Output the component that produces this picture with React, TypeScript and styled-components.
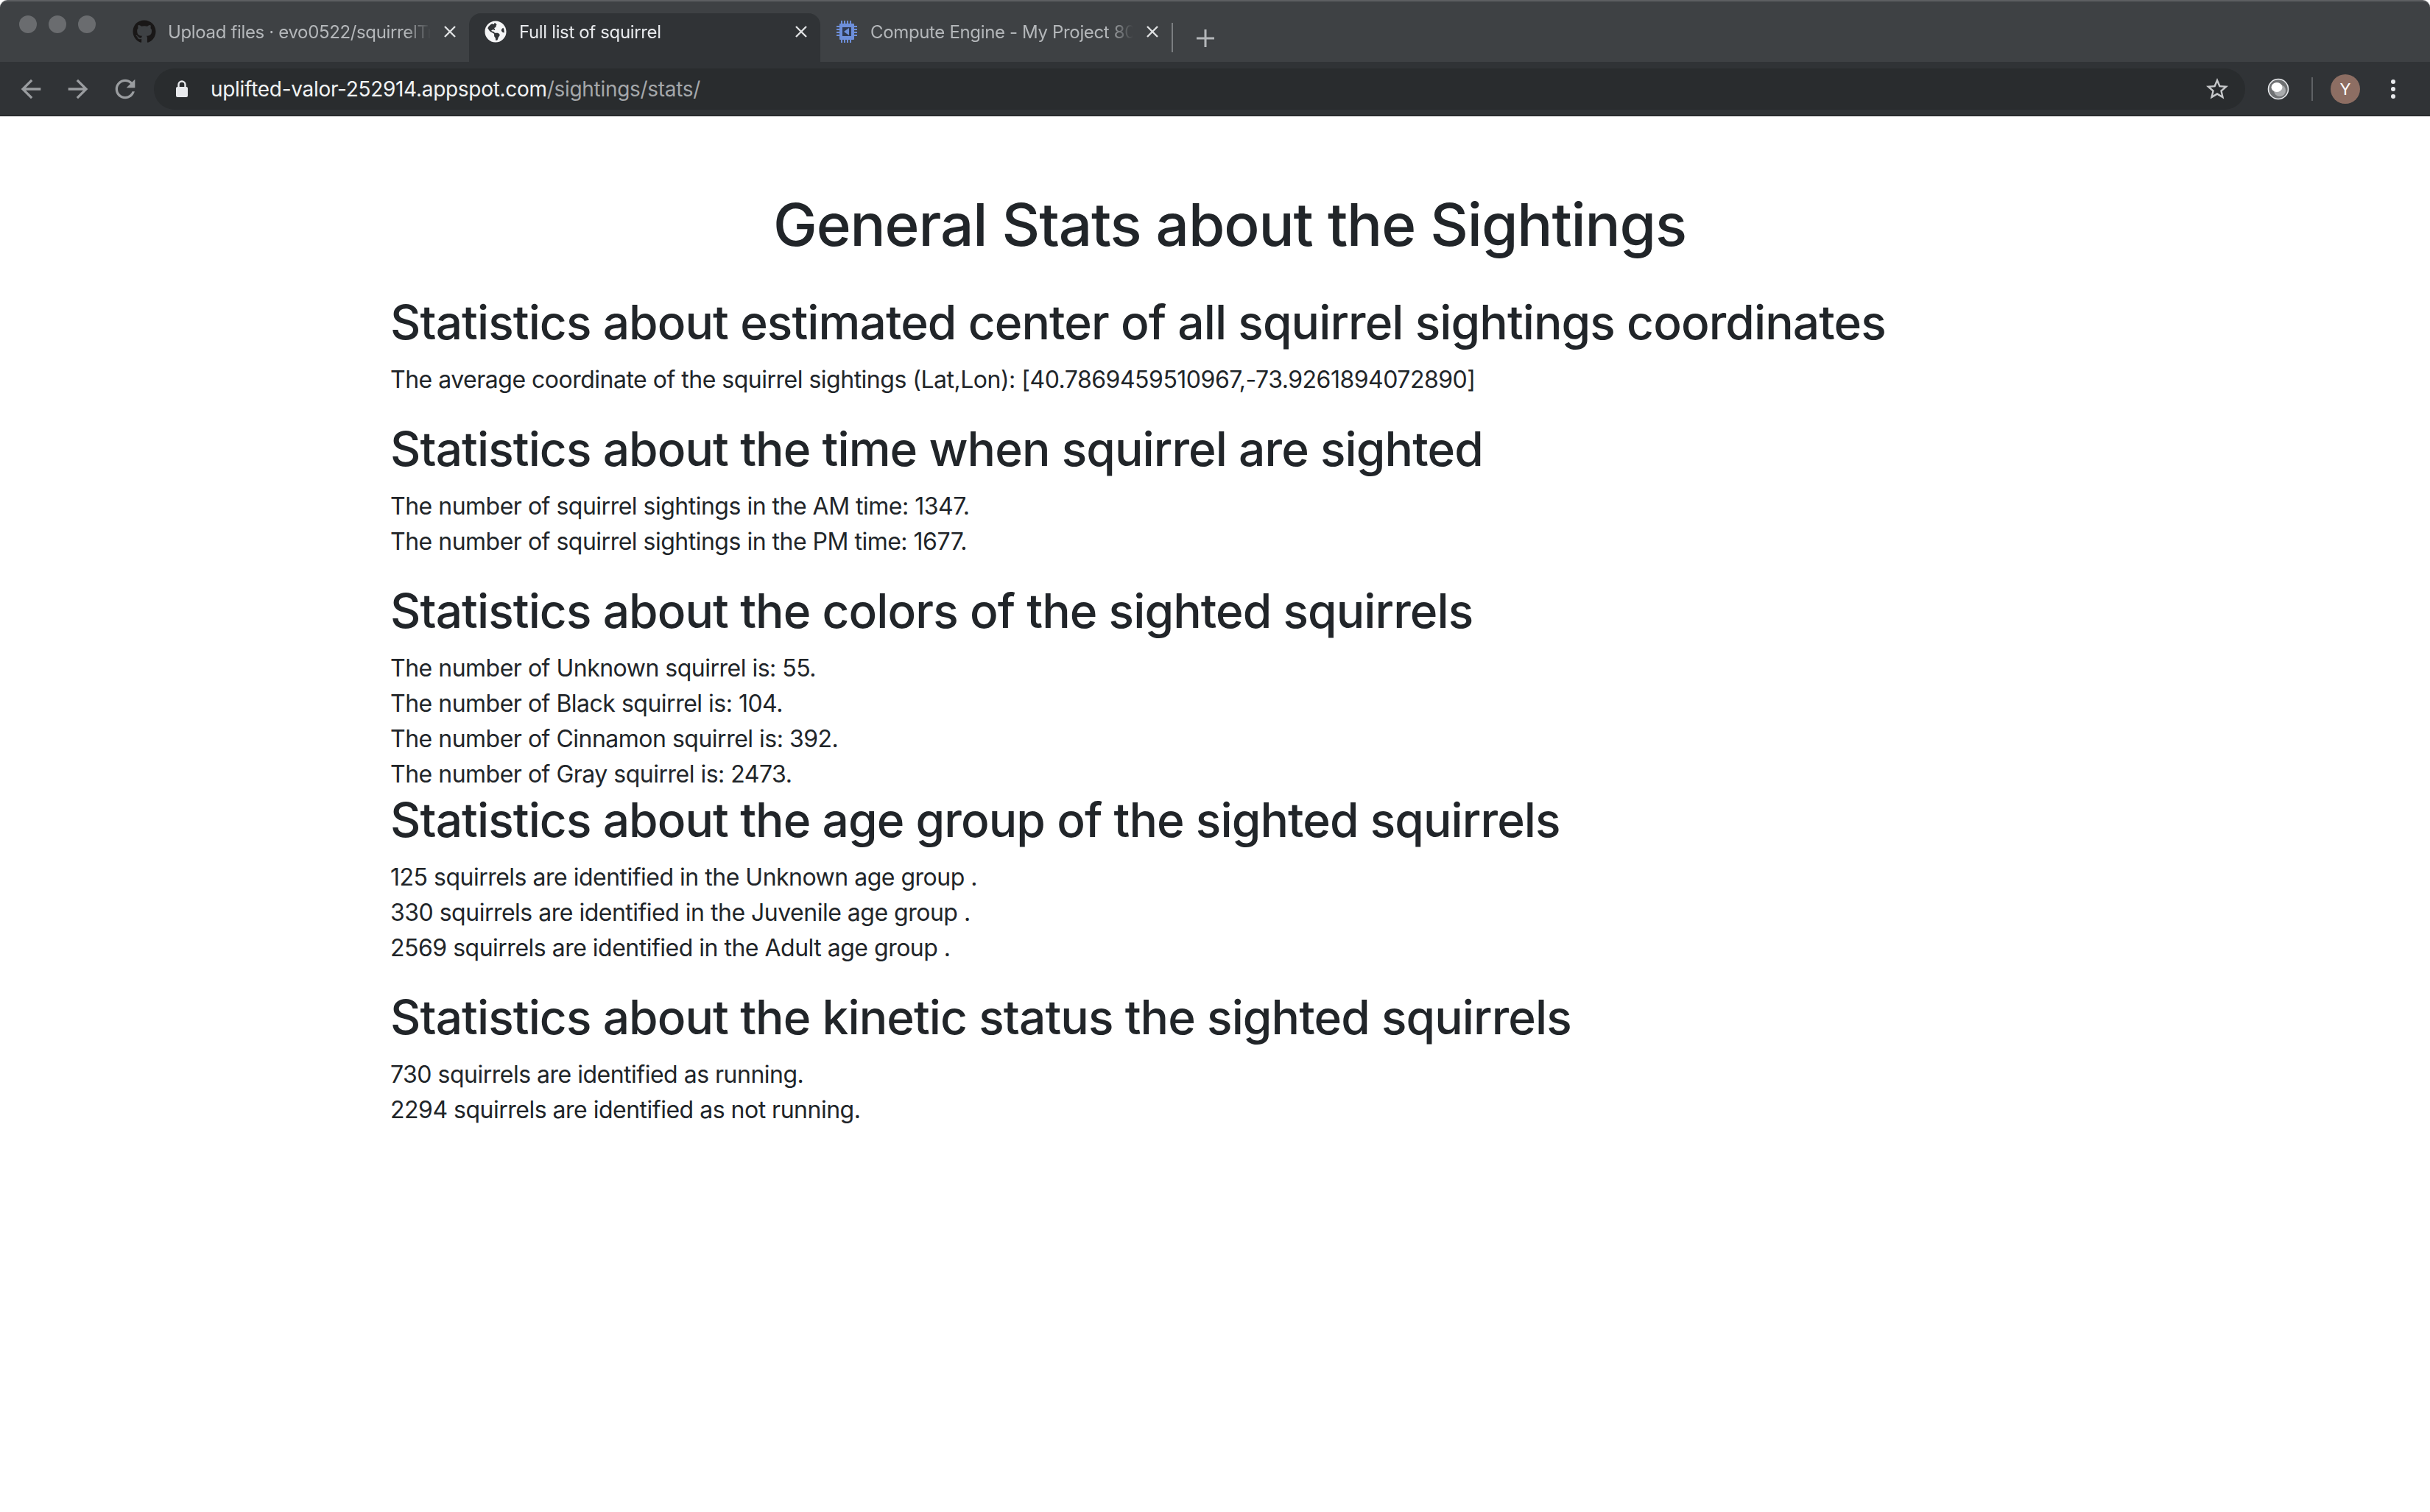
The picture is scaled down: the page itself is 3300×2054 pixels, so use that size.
import styled, { createGlobalStyle } from "styled-components";
import { FaGithub, FaGlobeAmericas } from "react-icons/fa";

const GlobalStyle = createGlobalStyle`
  html, body {
    margin: 0;
    padding: 0;
    background: #ffffff;
  }
  body {
    font-family: Inter, "Liberation Sans", sans-serif;
  }
`;

const Page = styled.div`
  width: 3300px;
  height: 2054px;
  overflow: hidden;
  background: #ffffff;
`;

const TabStrip = styled.div`
  height: 84px;
  box-sizing: border-box;
  padding-top: 16px;
  display: flex;
  align-items: stretch;
  background: #3e4144;
  border-top: 2px solid #5d5f62;
  border-radius: 10px 10px 0 0;
`;

const TrafficLights = styled.div`
  width: 160px;
  box-sizing: border-box;
  padding: 0 0 0 26px;
  margin-top: 3px;
  display: flex;
  gap: 16px;
`;

const TrafficDot = styled.span`
  width: 24px;
  height: 24px;
  border-radius: 50%;
  background: #6a6c6f;
`;

const Tab = styled.div<{ $active?: boolean }>`
  width: 477px;
  height: 66px;
  box-sizing: border-box;
  padding: 0 16px 16px 20px;
  display: flex;
  align-items: center;
  gap: 16px;
  border-radius: 16px 16px 0 0;
  background: ${(p) => (p.$active ? "#303336" : "transparent")};
  color: ${(p) => (p.$active ? "#e8eaed" : "#b4b7ba")};
`;

const TabIcon = styled.span`
  flex: none;
  width: 32px;
  height: 32px;
  display: flex;
  align-items: center;
  justify-content: center;
`;

const TabTitle = styled.span`
  flex: 1;
  min-width: 0;
  white-space: nowrap;
  overflow: hidden;
  font-size: 24px;
  letter-spacing: -0.35px;
  mask-image: linear-gradient(to right, #000 90%, transparent 100%);
`;

const TabClose = styled.svg`
  flex: none;
  width: 20px;
  height: 20px;
`;

const TabDivider = styled.span`
  width: 2px;
  height: 40px;
  margin-top: 13px;
  background: #7b7e81;
`;

const NewTab = styled.svg`
  width: 28px;
  height: 28px;
  margin: 20px 0 0 30px;
`;

const Toolbar = styled.div`
  height: 74px;
  box-sizing: border-box;
  padding: 8px 0 8px 22px;
  display: flex;
  align-items: center;
  background: #303336;
  border-bottom: 1px solid #1c1d1f;
`;

const NavIcon = styled.svg`
  flex: none;
  width: 40px;
  height: 40px;
  margin-right: 24px;
  fill: #9a9da0;
`;

const Omnibox = styled.div`
  width: 2840px;
  height: 56px;
  margin-left: -5px;
  box-sizing: border-box;
  padding: 0 20px 0 28px;
  display: flex;
  align-items: center;
  border-radius: 28px;
  background: #292c2e;
`;

const LockIcon = styled.svg`
  flex: none;
  width: 20px;
  height: 26px;
  margin-right: 29px;
`;

const Url = styled.div`
  flex: 1;
  font-size: 28px;
  letter-spacing: -0.3px;
  color: #f1f3f4;
`;

const UrlPath = styled.span`
  color: #a4a7aa;
`;

const StarIcon = styled.svg`
  flex: none;
  width: 36px;
  height: 36px;
  fill: #c6c8ca;
`;

const ToolbarEnd = styled.div`
  flex: 1;
  display: flex;
  align-items: center;
`;

const ExtensionIcon = styled.svg`
  width: 30px;
  height: 30px;
  margin-left: 30px;
`;

const ToolbarDivider = styled.span`
  width: 2px;
  height: 32px;
  margin-left: 30px;
  background: #5f6265;
`;

const Avatar = styled.span`
  width: 40px;
  height: 40px;
  margin-left: 24px;
  border-radius: 50%;
  background: #8d6e63;
  color: #ffffff;
  font-size: 22px;
  display: flex;
  align-items: center;
  justify-content: center;
`;

const MenuDots = styled.span`
  margin-left: 42px;
  display: flex;
  flex-direction: column;
  gap: 4px;
`;

const MenuDot = styled.span`
  width: 6px;
  height: 6px;
  border-radius: 50%;
  background: #e8eaed;
`;

const Content = styled.main`
  padding: 99px 0 0 530px;
  width: 2280px;
  color: #212529;
`;

const Title = styled.h1`
  margin: 0 0 47px;
  font-size: 80px;
  line-height: 96px;
  font-weight: 500;
  letter-spacing: -1.1px;
  text-align: center;
`;

const Section = styled.section<{ $tight?: boolean }>`
  margin-bottom: ${(p) => (p.$tight ? "0" : "32px")};
`;

const Heading = styled.h2`
  margin: 0 0 16px;
  font-size: 64px;
  line-height: 76px;
  font-weight: 500;
  letter-spacing: -0.9px;
`;

const Line = styled.p`
  margin: 0;
  font-size: 32px;
  line-height: 48px;
  letter-spacing: -0.5px;
`;

const sections = [
  {
    heading: "Statistics about estimated center of all squirrel sightings coordinates",
    lines: [
      "The average coordinate of the squirrel sightings (Lat,Lon): [40.7869459510967,-73.9261894072890]",
    ],
  },
  {
    heading: "Statistics about the time when squirrel are sighted",
    lines: [
      "The number of squirrel sightings in the AM time: 1347.",
      "The number of squirrel sightings in the PM time: 1677.",
    ],
  },
  {
    heading: "Statistics about the colors of the sighted squirrels",
    tight: true,
    lines: [
      "The number of Unknown squirrel is: 55.",
      "The number of Black squirrel is: 104.",
      "The number of Cinnamon squirrel is: 392.",
      "The number of Gray squirrel is: 2473.",
    ],
  },
  {
    heading: "Statistics about the age group of the sighted squirrels",
    lines: [
      "125 squirrels are identified in the Unknown age group .",
      "330 squirrels are identified in the Juvenile age group .",
      "2569 squirrels are identified in the Adult age group .",
    ],
  },
  {
    heading: "Statistics about the kinetic status the sighted squirrels",
    lines: [
      "730 squirrels are identified as running.",
      "2294 squirrels are identified as not running.",
    ],
  },
];

const CloseGlyph = () => (
  <TabClose viewBox="0 0 20 20">
    <path d="M3 3l14 14M17 3L3 17" stroke="#dfe1e3" strokeWidth="2.4" fill="none" />
  </TabClose>
);

const ChipIcon = () => (
  <svg width="30" height="32" viewBox="0 0 30 32">
    <path
      d="M8 1v4M12 1v4M16 1v4M20 1v4M8 27v4M12 27v4M16 27v4M20 27v4M1 9h4M1 13h4M1 17h4M1 21h4M25 9h4M25 13h4M25 17h4M25 21h4"
      stroke="#6d8fdb"
      strokeWidth="2"
    />
    <rect x="5" y="5" width="20" height="22" rx="1" fill="#6d8fdb" />
    <rect x="9" y="10" width="12" height="12" fill="#2f3a52" />
    <path d="M11 16l7-5v10z" fill="#6d8fdb" />
  </svg>
);

const App = () => {
  return (
    <Page>
      <GlobalStyle />
      <TabStrip>
        <TrafficLights>
          <TrafficDot />
          <TrafficDot />
          <TrafficDot />
        </TrafficLights>
        <Tab>
          <TabIcon>
            <FaGithub size={32} color="#191717" />
          </TabIcon>
          <TabTitle>Upload files · evo0522/squirrelTracker</TabTitle>
          <CloseGlyph />
        </Tab>
        <Tab $active>
          <TabIcon>
            <FaGlobeAmericas size={30} color="#f4f5f6" />
          </TabIcon>
          <TabTitle>Full list of squirrel</TabTitle>
          <CloseGlyph />
        </Tab>
        <Tab>
          <TabIcon>
            <ChipIcon />
          </TabIcon>
          <TabTitle>Compute Engine - My Project 80</TabTitle>
          <CloseGlyph />
        </Tab>
        <TabDivider />
        <NewTab viewBox="0 0 28 28">
          <path d="M14 2v24M2 14h24" stroke="#b4b7ba" strokeWidth="3" fill="none" />
        </NewTab>
      </TabStrip>
      <Toolbar>
        <NavIcon viewBox="0 0 24 24">
          <path d="M20 11H7.83l5.59-5.59L12 4l-8 8 8 8 1.41-1.41L7.83 13H20v-2z" />
        </NavIcon>
        <NavIcon viewBox="0 0 24 24">
          <path d="M12 4l-1.41 1.41L16.17 11H4v2h12.17l-5.58 5.59L12 20l8-8z" />
        </NavIcon>
        <NavIcon viewBox="0 0 24 24">
          <path d="M17.65 6.35C16.2 4.9 14.21 4 12 4c-4.42 0-7.99 3.58-7.99 8s3.57 8 7.99 8c3.73 0 6.84-2.55 7.73-6h-2.08c-.82 2.33-3.04 4-5.65 4-3.31 0-6-2.69-6-6s2.69-6 6-6c1.66 0 3.14.69 4.22 1.78L13 11h7V4l-2.35 2.35z" />
        </NavIcon>
        <Omnibox>
          <LockIcon viewBox="0 0 20 26">
            <path d="M5.5 11V7a4.5 4.5 0 0 1 9 0v4" stroke="#e8eaed" strokeWidth="2.4" fill="none" />
            <rect x="2" y="10" width="16" height="14" rx="2" fill="#e8eaed" />
          </LockIcon>
          <Url>
            uplifted-valor-252914.appspot.com<UrlPath>/sightings/stats/</UrlPath>
          </Url>
          <StarIcon viewBox="0 0 24 24">
            <path d="M22 9.24l-7.19-.62L12 2 9.19 8.63 2 9.24l5.46 4.73L5.82 21 12 17.27 18.18 21l-1.63-7.03L22 9.24zM12 15.4l-3.76 2.27 1-4.28-3.32-2.88 4.38-.38L12 6.1l1.71 4.04 4.38.38-3.32 2.88 1 4.28L12 15.4z" />
          </StarIcon>
        </Omnibox>
        <ToolbarEnd>
          <ExtensionIcon viewBox="0 0 30 30">
            <circle cx="15" cy="15" r="13.5" fill="#6f7173" stroke="#e8eaed" strokeWidth="1.6" />
            <circle cx="17" cy="17" r="8" fill="#a9abad" />
            <ellipse cx="13" cy="12.5" rx="7.5" ry="6.5" fill="#ffffff" />
          </ExtensionIcon>
          <ToolbarDivider />
          <Avatar>Y</Avatar>
          <MenuDots>
            <MenuDot />
            <MenuDot />
            <MenuDot />
          </MenuDots>
        </ToolbarEnd>
      </Toolbar>
      <Content>
        <Title>General Stats about the Sightings</Title>
        {sections.map((section) => (
          <Section key={section.heading} $tight={section.tight}>
            <Heading>{section.heading}</Heading>
            {section.lines.map((line) => (
              <Line key={line}>{line}</Line>
            ))}
          </Section>
        ))}
      </Content>
    </Page>
  );
};

export default App;
